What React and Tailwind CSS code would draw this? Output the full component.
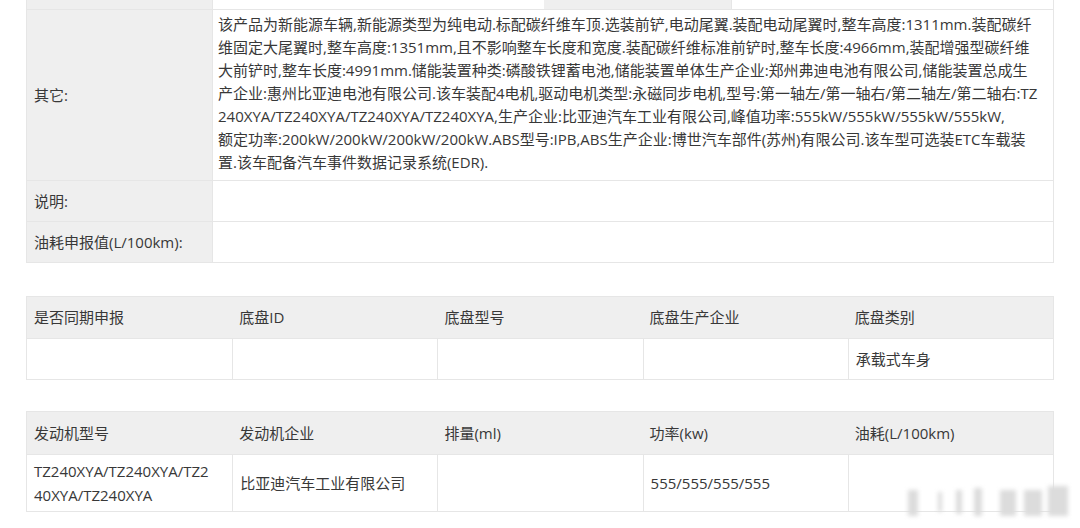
import React from "react";

const otherLines = [
  "该产品为新能源车辆,新能源类型为纯电动.标配碳纤维车顶.选装前铲,电动尾翼.装配电动尾翼时,整车高度:1311mm.装配碳纤",
  "维固定大尾翼时,整车高度:1351mm,且不影响整车长度和宽度.装配碳纤维标准前铲时,整车长度:4966mm,装配增强型碳纤维",
  "大前铲时,整车长度:4991mm.储能装置种类:磷酸铁锂蓄电池,储能装置单体生产企业:郑州弗迪电池有限公司,储能装置总成生",
  "产企业:惠州比亚迪电池有限公司.该车装配4电机,驱动电机类型:永磁同步电机,型号:第一轴左/第一轴右/第二轴左/第二轴右:TZ",
  "240XYA/TZ240XYA/TZ240XYA/TZ240XYA,生产企业:比亚迪汽车工业有限公司,峰值功率:555kW/555kW/555kW/555kW,",
  "额定功率:200kW/200kW/200kW/200kW.ABS型号:IPB,ABS生产企业:博世汽车部件(苏州)有限公司.该车型可选装ETC车载装",
  "置.该车配备汽车事件数据记录系统(EDR).",
];

const chassisHead = ["是否同期申报", "底盘ID", "底盘型号", "底盘生产企业", "底盘类别"];
const chassisBody = ["", "", "", "", "承载式车身"];

const engineHead = ["发动机型号", "发动机企业", "排量(ml)", "功率(kw)", "油耗(L/100km)"];

// blurred watermark strokes (decorative)
const marks = [
  { l: 0, w: 10, h: 26, t: 6 },
  { l: 30, w: 4, h: 20, t: 8 },
  { l: 48, w: 6, h: 24, t: 6 },
  { l: 66, w: 8, h: 28, t: 4 },
  { l: 92, w: 16, h: 26, t: 6 },
  { l: 116, w: 18, h: 26, t: 6 },
  { l: 140, w: 20, h: 30, t: 2 },
];

const GridTable = ({ head, children, headH }) => (
  <div className="ml-[26px] w-[1028px] border border-[#e6e6e6]">
    <div className={`grid grid-cols-5 bg-[#efefef] ${headH}`}>
      {head.map((h, i) => (
        <div key={i} className="flex items-center pl-[7px]">
          {h}
        </div>
      ))}
    </div>
    {children}
  </div>
);

const Label = ({ children, className = "" }) => (
  <div className={`w-[185px] shrink-0 bg-[#efefef] flex items-center pl-[7px] ${className}`}>
    {children}
  </div>
);

export default function App() {
  return (
    <div
      className="relative w-[1080px] h-[528px] overflow-hidden bg-white text-[15px] text-[#383838]"
      style={{ fontFamily: '"Open Sans", "Noto Sans CJK SC", sans-serif' }}
    >
      {/* spec table */}
      <div className="ml-[26px] w-[1028px] border-x border-b border-[#e6e6e6]">
        <div className="flex h-[10px] border-b border-[#e6e6e6]">
          <div className="w-[185px] bg-[#efefef]" />
          <div className="w-[332px] border-l border-[#e6e6e6]" />
          <div className="w-[187px] bg-[#efefef]" />
          <div className="flex-1 border-l border-[#e6e6e6]" />
        </div>
        <div className="flex">
          <Label>其它:</Label>
          <div className="flex-1 border-l border-[#e6e6e6] pl-[5px] pt-[3px] pb-[6px] leading-[23px]">
            {otherLines.map((l, i) => (
              <div key={i} className="whitespace-nowrap">
                {l}
              </div>
            ))}
          </div>
        </div>
        <div className="flex h-[41px] border-t border-[#e6e6e6]">
          <Label>说明:</Label>
          <div className="flex-1 border-l border-[#e6e6e6]" />
        </div>
        <div className="flex h-[41px] border-t border-[#e6e6e6]">
          <Label>油耗申报值(L/100km):</Label>
          <div className="flex-1 border-l border-[#e6e6e6]" />
        </div>
      </div>

      <div className="mt-[33px]">
        <GridTable head={chassisHead} headH="h-[41px]">
          <div className="grid grid-cols-5 h-[41px] border-t border-[#e6e6e6]">
            {chassisBody.map((c, i) => (
              <div
                key={i}
                className={`flex items-center pl-[7px] ${i > 0 ? "border-l border-[#e6e6e6]" : ""}`}
              >
                {c}
              </div>
            ))}
          </div>
        </GridTable>
      </div>

      <div className="mt-[31px]">
        <GridTable head={engineHead} headH="h-[42px]">
          <div className="grid grid-cols-5 h-[57px] border-t border-[#e6e6e6]">
            <div className="flex items-center pl-[7px] leading-[24px]">
              TZ240XYA/TZ240XYA/TZ2
              <br />
              40XYA/TZ240XYA
            </div>
            <div className="flex items-center pl-[7px] border-l border-[#e6e6e6]">
              比亚迪汽车工业有限公司
            </div>
            <div className="border-l border-[#e6e6e6]" />
            <div className="flex items-center pl-[7px] border-l border-[#e6e6e6]">
              555/555/555/555
            </div>
            <div className="border-l border-[#e6e6e6]" />
          </div>
        </GridTable>
      </div>

      {/* faint watermark */}
      <div className="absolute left-[908px] top-[484px] w-[162px] h-[36px] blur-[2px]">
        {marks.map((m, i) => (
          <div
            key={i}
            className="absolute bg-[#dcdcdc]"
            style={{ left: m.l, top: m.t, width: m.w, height: m.h }}
          />
        ))}
      </div>
    </div>
  );
}
